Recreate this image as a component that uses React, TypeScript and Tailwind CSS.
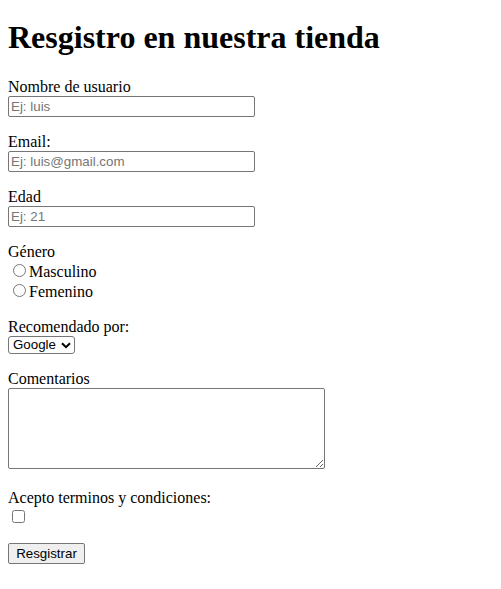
import { useState } from "react"

const serif = "font-['Liberation_Serif','Times_New_Roman',serif]"
const sans = "font-['Liberation_Sans',Arial,sans-serif]"

const inputCls = `block h-[21px] w-[247px] rounded-[2px] border border-[#767676] bg-white px-[2px] text-[13.33px] text-black placeholder:text-[#757575] ${sans}`

const App = () => {
  const [genero, setGenero] = useState("")
  const [acepto, setAcepto] = useState(false)

  return (
    <div className={`min-h-[589px] w-[501px] bg-white px-2 text-[16px] text-black ${serif}`}>
      <h1 className="mt-[19px] text-[32px] font-bold leading-[37px]">Resgistro en nuestra tienda</h1>

      <form className="mt-[22px] flex flex-col items-start" onSubmit={(e) => e.preventDefault()}>
        <label htmlFor="usuario" className="h-[18px] leading-[18px]">Nombre de usuario</label>
        <input id="usuario" type="text" placeholder="Ej: luis" className={inputCls} />

        <label htmlFor="email" className="mt-[16px] h-[18px] leading-[18px]">Email:</label>
        <input id="email" type="email" placeholder="Ej: luis@gmail.com" className={inputCls} />

        <label htmlFor="edad" className="mt-[16px] h-[18px] leading-[18px]">Edad</label>
        <input id="edad" type="text" placeholder="Ej: 21" className={inputCls} />

        <span className="mt-[16px] h-[18px] leading-[18px]">Género</span>
        <label className="block h-[20px] leading-[20px]">
          <input
            type="radio"
            name="genero"
            checked={genero === "m"}
            onChange={() => setGenero("m")}
            className="ml-[5px] mr-[3px] mt-[3px] h-[13px] w-[13px] align-baseline"
          />
          Masculino
        </label>
        <label className="block h-[20px] leading-[20px]">
          <input
            type="radio"
            name="genero"
            checked={genero === "f"}
            onChange={() => setGenero("f")}
            className="ml-[5px] mr-[3px] mt-[3px] h-[13px] w-[13px] align-baseline"
          />
          Femenino
        </label>

        <label htmlFor="recomendado" className="mt-[17px] h-[18px] leading-[18px]">Recomendado por:</label>
        <div className="relative h-[18px] w-[67px]">
          <select
            id="recomendado"
            className={`block h-[18px] w-[67px] appearance-none rounded-[3px] border border-[#767676] bg-white pl-[4px] pr-[16px] text-[13.33px] leading-[16px] text-black ${sans}`}
          >
            <option>Google</option>
            <option>Facebook</option>
            <option>Amigos</option>
          </select>
          <svg
            className="pointer-events-none absolute left-[53px] top-[6px]"
            width="10"
            height="7"
            viewBox="0 0 10 7"
          >
            <path d="M1 1.2 L5 5.2 L9 1.2" fill="none" stroke="#000" strokeWidth="2" />
          </svg>
        </div>

        <label htmlFor="comentarios" className="mt-[16px] h-[18px] leading-[18px]">Comentarios</label>
        <textarea
          id="comentarios"
          className={`block h-[81px] w-[317px] rounded-[2px] border border-[#767676] bg-white p-[2px] text-[13.33px] ${sans}`}
        />

        <span className="mt-[20px] h-[18px] leading-[18px]">Acepto terminos y condiciones:</span>
        <input
          type="checkbox"
          checked={acepto}
          onChange={(e) => setAcepto(e.target.checked)}
          className="ml-[4px] mt-[3px] h-[13px] w-[13px]"
        />

        <button
          type="submit"
          className={`mt-[20px] h-[21px] w-[77px] rounded-[2px] border border-[#767676] bg-[#efefef] text-[13.33px] text-black ${sans}`}
        >
          Resgistrar
        </button>
      </form>
    </div>
  )
}

export default App
